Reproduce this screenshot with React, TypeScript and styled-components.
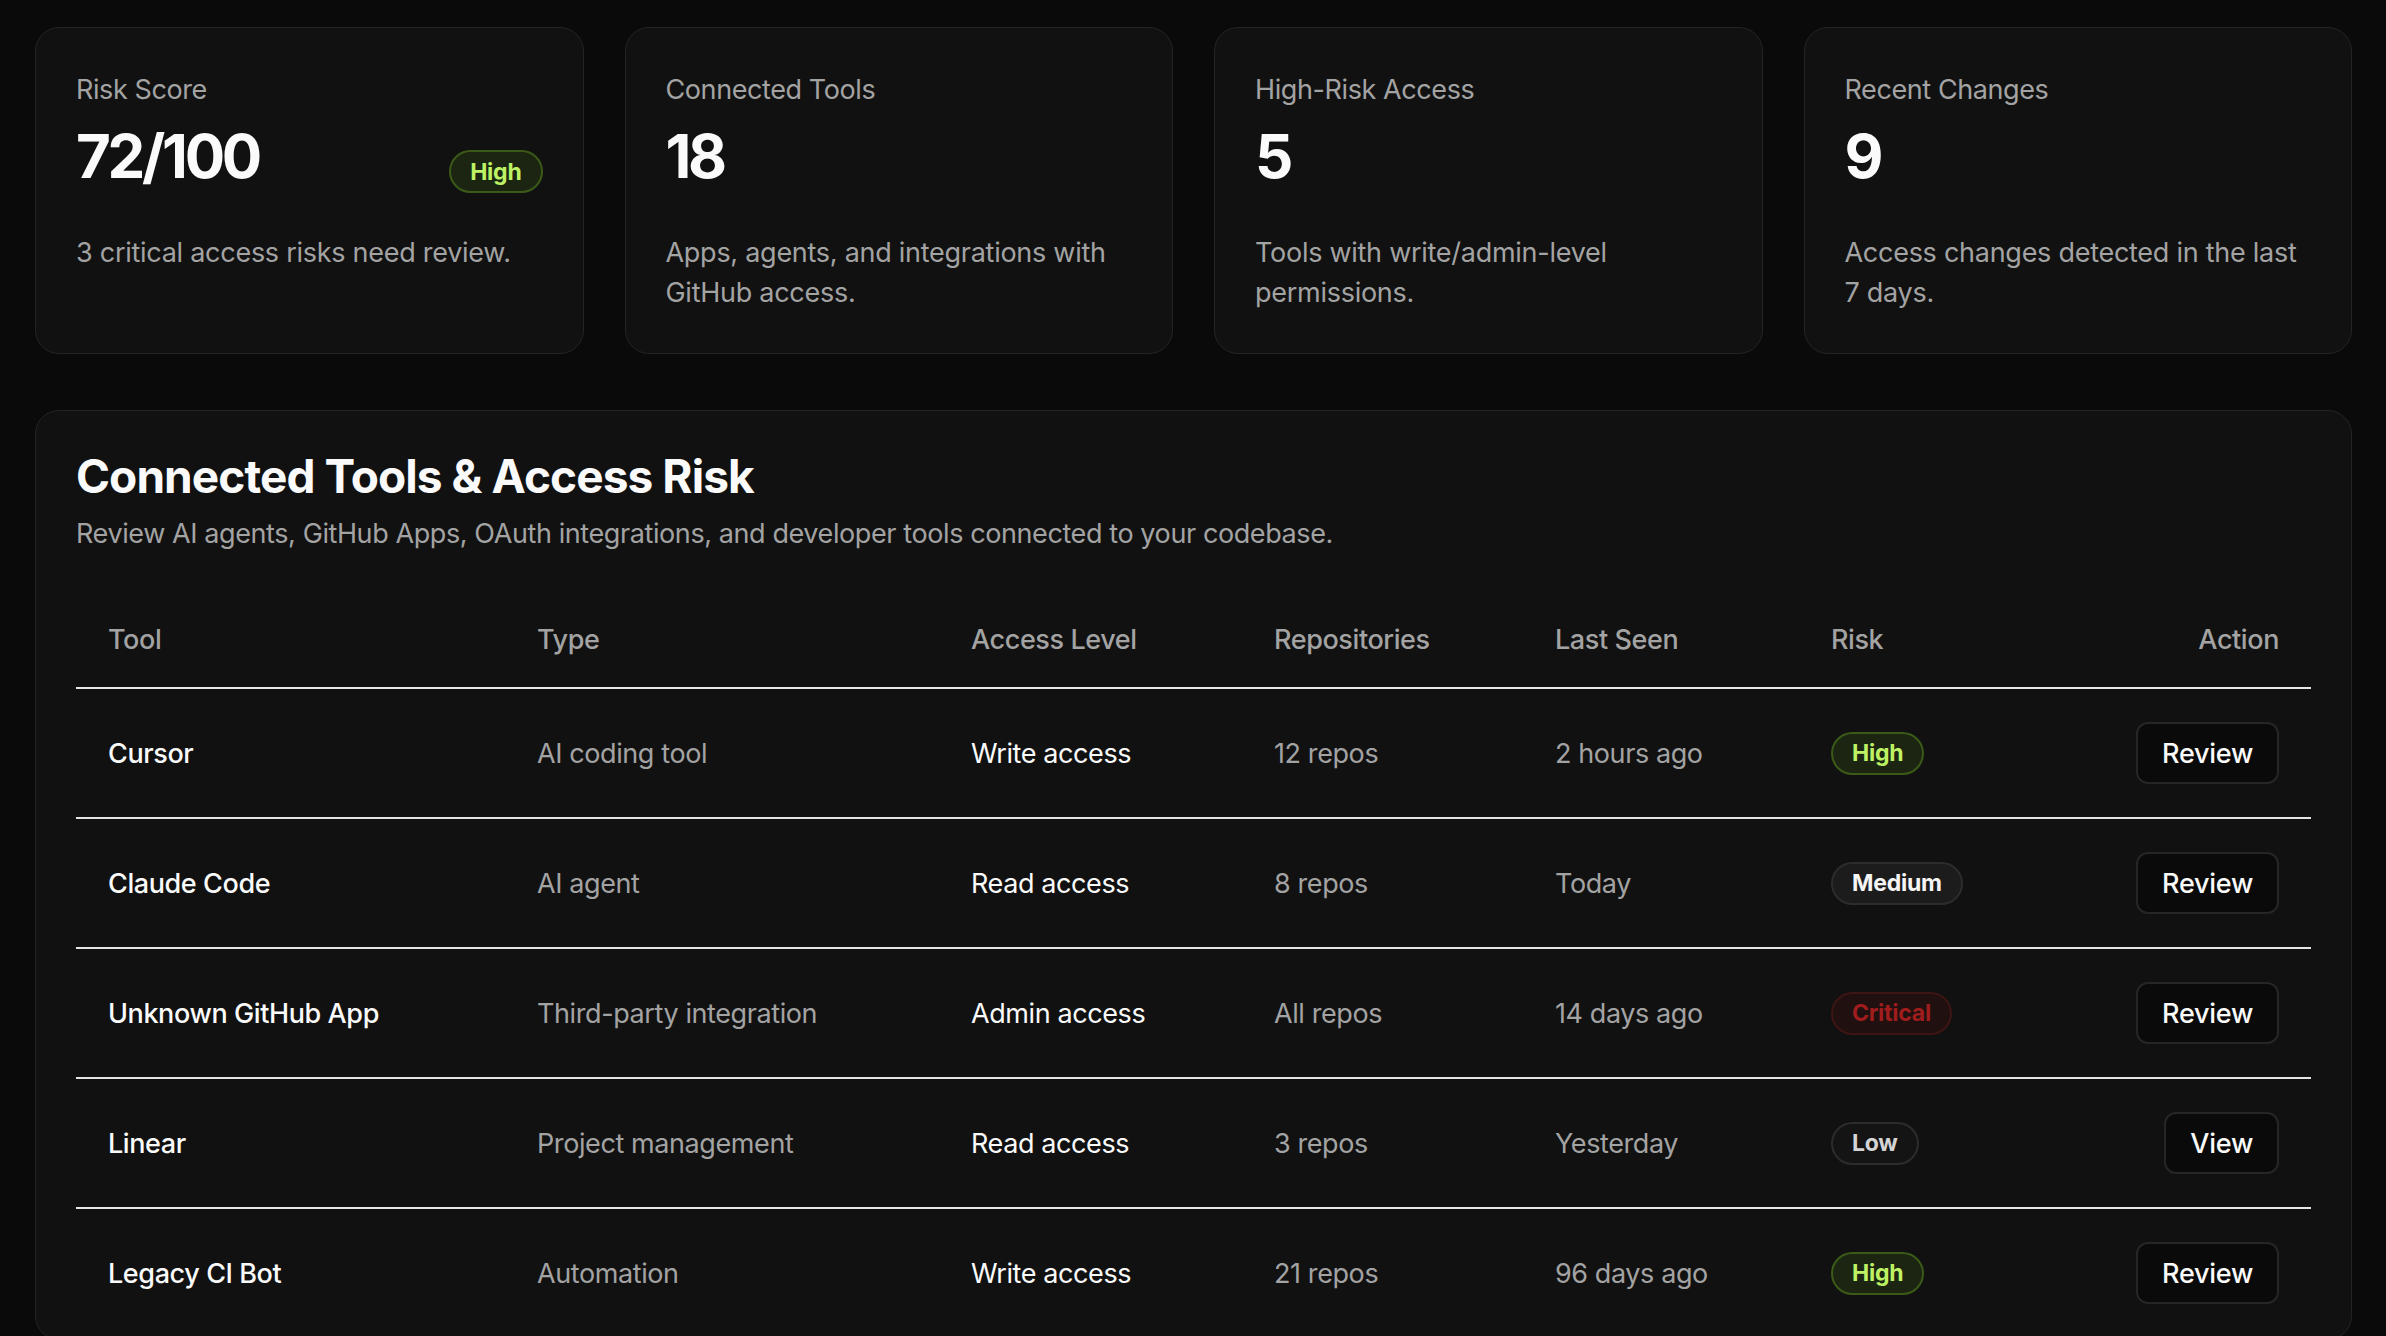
import React from 'react';
import styled, {createGlobalStyle} from 'styled-components'

type RiskLevel = 'High' | 'Medium' | 'Critical' | 'Low'

type ToolRow = {
    name: string,
    type: string,
    access: string,
    repos: string,
    lastSeen: string,
    risk: RiskLevel,
    action: string,
}

type StatData = {
    label: string,
    value: string,
    note: string,
    badge?: RiskLevel,
}

const stats: StatData[] = [
    {label: 'Risk Score', value: '72/100', note: '3 critical access risks need review.', badge: 'High'},
    {label: 'Connected Tools', value: '18', note: 'Apps, agents, and integrations with GitHub access.'},
    {label: 'High-Risk Access', value: '5', note: 'Tools with write/admin-level permissions.'},
    {label: 'Recent Changes', value: '9', note: 'Access changes detected in the last 7 days.'},
]

const tools: ToolRow[] = [
    {name: 'Cursor', type: 'AI coding tool', access: 'Write access', repos: '12 repos', lastSeen: '2 hours ago', risk: 'High', action: 'Review'},
    {name: 'Claude Code', type: 'AI agent', access: 'Read access', repos: '8 repos', lastSeen: 'Today', risk: 'Medium', action: 'Review'},
    {name: 'Unknown GitHub App', type: 'Third-party integration', access: 'Admin access', repos: 'All repos', lastSeen: '14 days ago', risk: 'Critical', action: 'Review'},
    {name: 'Linear', type: 'Project management', access: 'Read access', repos: '3 repos', lastSeen: 'Yesterday', risk: 'Low', action: 'View'},
    {name: 'Legacy CI Bot', type: 'Automation', access: 'Write access', repos: '21 repos', lastSeen: '96 days ago', risk: 'High', action: 'Review'},
]

const badgeColors: Record<RiskLevel, {fg: string, bg: string, border: string}> = {
    High: {fg: '#bef264', bg: '#1b2512', border: '#3b5a18'},
    Medium: {fg: '#f5f5f5', bg: '#1c1c1c', border: '#2c2c2c'},
    Critical: {fg: '#9f1d1d', bg: '#211010', border: '#3d1515'},
    Low: {fg: '#d4d4d4', bg: '#141414', border: '#2c2c2c'},
}

const GlobalStyle = createGlobalStyle`
    html, body {
        margin: 0;
        background: #0a0a0a;
    }
    body {
        font-family: "Inter", "Liberation Sans", sans-serif;
        color: #fafafa;
        -webkit-font-smoothing: antialiased;
    }
`

const Page = styled.div`
    padding: 27px 34px 0 35px;
    display: flex;
    flex-direction: column;
    gap: 56px;
`

const StatGrid = styled.div`
    display: grid;
    grid-template-columns: repeat(4, 1fr);
    gap: 41px;
`

const Card = styled.div`
    background: #111111;
    border: 1px solid #242424;
    border-radius: 24px;
    padding: 42px 40px 40px 40px;
    display: flex;
    flex-direction: column;
`

const StatLabel = styled.div`
    font-size: 27px;
    line-height: 39px;
    color: #a3a3a3;
    letter-spacing: -0.015em;
`

const ValueRow = styled.div`
    margin-top: 14px;
    display: flex;
    justify-content: space-between;
    align-items: flex-end;
`

const StatValue = styled.div`
    font-size: 60px;
    line-height: 66px;
    font-weight: 700;
    letter-spacing: -0.055em;
    color: #fafafa;
`

const StatNote = styled.div`
    margin-top: 44px;
    font-size: 27px;
    line-height: 40px;
    color: #a3a3a3;
    letter-spacing: -0.01em;
`

const Badge = styled.span<{$level: RiskLevel}>`
    display: inline-flex;
    align-items: center;
    height: 43px;
    box-sizing: border-box;
    padding: 0 19px;
    border-radius: 999px;
    font-size: 23px;
    font-weight: 700;
    letter-spacing: -0.01em;
    color: ${p => badgeColors[p.$level].fg};
    background: ${p => badgeColors[p.$level].bg};
    border: 2px solid ${p => badgeColors[p.$level].border};
`

const ScoreBadge = styled(Badge)`
    margin-bottom: -4px;
`

const Panel = styled.div`
    background: #111111;
    border: 1px solid #242424;
    border-radius: 24px;
    padding: 38px 40px 0 40px;
`

const PanelTitle = styled.h2`
    margin: 0;
    font-size: 46px;
    line-height: 55px;
    font-weight: 700;
    letter-spacing: -0.02em;
    color: #fafafa;
`

const PanelSub = styled.p`
    margin: 10px 0 0 0;
    font-size: 27px;
    line-height: 39px;
    color: #a3a3a3;
    letter-spacing: -0.015em;
`

const Table = styled.div`
    margin-top: 38px;
    display: flex;
    flex-direction: column;
`

const Row = styled.div<{$head?: boolean}>`
    display: grid;
    grid-template-columns: 429fr 434fr 303fr 281fr 276fr 256fr 256fr;
    align-items: center;
    border-bottom: 2px solid #e5e5e5;
    height: ${p => p.$head ? '96px' : '128px'};
`

const Cell = styled.div<{$tone?: 'strong' | 'plain' | 'muted' | 'head', $right?: boolean}>`
    padding: 0 32px;
    font-size: 27px;
    line-height: 39px;
    letter-spacing: -0.015em;
    white-space: nowrap;
    display: flex;
    justify-content: ${p => p.$right ? 'flex-end' : 'flex-start'};
    color: ${p => p.$tone === 'muted' || p.$tone === 'head' ? '#a3a3a3' : '#fafafa'};
    font-weight: ${p => p.$tone === 'strong' || p.$tone === 'head' ? 500 : 400};
`

const ActionButton = styled.button`
    height: 62px;
    box-sizing: border-box;
    padding: 0 24px;
    border-radius: 12px;
    background: #0a0a0a;
    border: 2px solid #262626;
    color: #fafafa;
    font-family: inherit;
    font-size: 27px;
    font-weight: 500;
    letter-spacing: -0.01em;
`

function StatCard(props: {data: StatData}){
    const d = props.data
    return(
        <Card>
            <StatLabel>{d.label}</StatLabel>
            <ValueRow>
                <StatValue>{d.value}</StatValue>
                {d.badge && <ScoreBadge $level={d.badge}>{d.badge}</ScoreBadge>}
            </ValueRow>
            <StatNote>{d.note}</StatNote>
        </Card>
    )
}

function ToolLine(props: {tool: ToolRow}){
    const t = props.tool
    return(
        <Row>
            <Cell $tone="strong">{t.name}</Cell>
            <Cell $tone="muted">{t.type}</Cell>
            <Cell $tone="plain">{t.access}</Cell>
            <Cell $tone="muted">{t.repos}</Cell>
            <Cell $tone="muted">{t.lastSeen}</Cell>
            <Cell><Badge $level={t.risk}>{t.risk}</Badge></Cell>
            <Cell $right><ActionButton>{t.action}</ActionButton></Cell>
        </Row>
    )
}

export default function App(){
    const heads = ['Tool', 'Type', 'Access Level', 'Repositories', 'Last Seen', 'Risk']
    return(
        <>
            <GlobalStyle/>
            <Page>
                <StatGrid>
                    {stats.map(s => <StatCard data={s} key={s.label}/>)}
                </StatGrid>
                <Panel>
                    <PanelTitle>Connected Tools &amp; Access Risk</PanelTitle>
                    <PanelSub>Review AI agents, GitHub Apps, OAuth integrations, and developer tools connected to your codebase.</PanelSub>
                    <Table>
                        <Row $head>
                            {heads.map(h => <Cell $tone="head" key={h}>{h}</Cell>)}
                            <Cell $tone="head" $right>Action</Cell>
                        </Row>
                        {tools.map(t => <ToolLine tool={t} key={t.name}/>)}
                    </Table>
                </Panel>
            </Page>
        </>
    )
}
